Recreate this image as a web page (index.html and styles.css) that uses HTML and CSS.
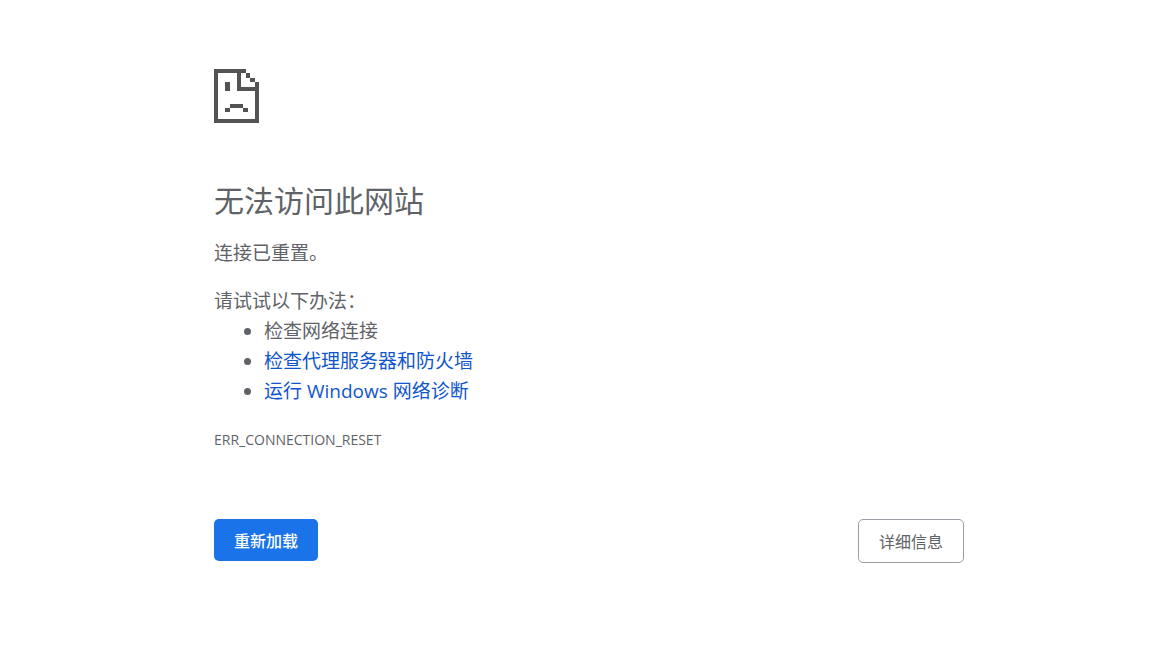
FILE: index.html
```
<!DOCTYPE html>
<html lang="zh-CN">
<head>
  <meta charset="UTF-8">
  <meta name="viewport" content="width=device-width, initial-scale=1.0">
  <title>无法访问此网站</title>
  <link rel="stylesheet" href="styles.css">
</head>
<body>
  <main class="error-page">
    <svg class="error-icon" viewBox="0 0 45 54" aria-hidden="true">
      <path fill="#535353" fill-rule="evenodd" d="M0 0H32V4H36V9H41V13H45V54H0ZM4 4V50H41V22H23V4ZM27 4V18H41V13H36V9H32V4Z"/>
      <path fill="#535353" d="M11 13h5v9h-5zM16 35h13v4H16zM11 39h5v4h-5zM29 39h5v4h-5z"/>
    </svg>
    <h1>无法访问此网站</h1>
    <p class="summary">连接已重置。</p>
    <div class="suggestions">
      <p>请试试以下办法：</p>
      <ul>
        <li>检查网络连接</li>
        <li><a href="#">检查代理服务器和防火墙</a></li>
        <li><a href="#">运行 Windows 网络诊断</a></li>
      </ul>
    </div>
    <div class="error-code">ERR_CONNECTION_RESET</div>
    <div class="buttons">
      <button type="button" class="reload">重新加载</button>
      <button type="button" class="details">详细信息</button>
    </div>
  </main>
</body>
</html>
```
FILE: styles.css
```
* {
  box-sizing: border-box;
}
body {
  margin: 0;
  padding-left: 20px;
  background: #fff;
  color: #5f6368;
  font-family: "Open Sans", "Noto Sans CJK SC", sans-serif;
  font-size: 19px;
  line-height: 30px;
}
.error-page {
  max-width: 750px;
  margin: 0 auto;
  padding-top: 69px;
}
.error-icon {
  display: block;
  width: 45px;
  height: 54px;
}
h1 {
  margin: 59px 0 18px;
  font-size: 30px;
  font-weight: 400;
  line-height: 38px;
}
p {
  margin: 0;
}
.summary {
  margin-bottom: 18px;
}
ul {
  margin: 0;
  padding-left: 50px;
}
a {
  color: #1155cc;
  text-decoration: none;
}
.error-code {
  margin-top: 24px;
  font-size: 14px;
  line-height: 20px;
}
.buttons {
  display: flex;
  justify-content: space-between;
  align-items: flex-start;
  margin-top: 69px;
}
button {
  padding: 0 20px;
  border-radius: 5px;
  font-family: inherit;
  font-size: 16px;
  cursor: pointer;
}
.reload {
  height: 42px;
  border: none;
  background: #1a73e8;
  color: #fff;
  font-weight: 500;
}
.details {
  height: 44px;
  border: 1px solid #9aa0a6;
  background: #fff;
  color: #5f6368;
}
```
